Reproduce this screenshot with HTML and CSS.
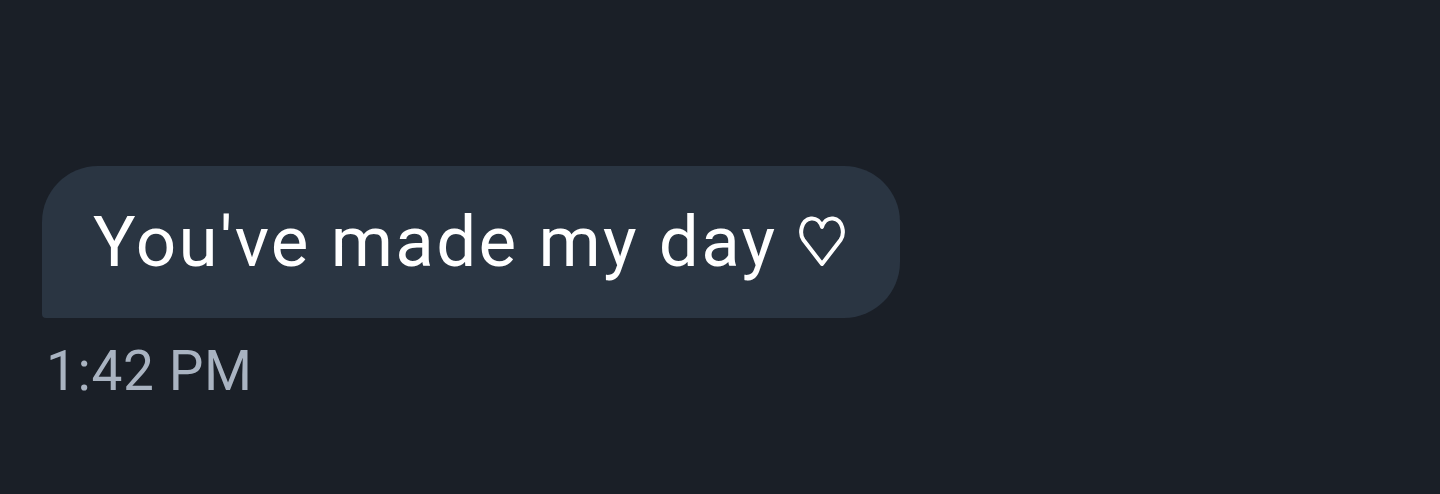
FILE: index.html
```html
<!doctype html>
<html lang="en">
<head>
    <meta charset="UTF-8">
    <title>Message</title>
    <link rel="stylesheet" href="styles.css">
</head>
<body>
<div class="chat">
    <div class="msg">
        <div class="bubble">You've made my day <svg class="heart" width="46" height="51" viewBox="0 0 46 51"><path d="M23 48 L4.5 24 C0 17.5 2 4 12 2.5 C17.5 1.8 21.5 6 23 11 C24.5 6 28.5 1.8 34 2.5 C44 4 46 17.5 41.5 24 Z" fill="none" stroke="#fff" stroke-width="4" stroke-linejoin="round"/></svg></div>
        <div class="time">1:42 PM</div>
    </div>
</div>
</body>
</html>
```

FILE: styles.css
```css
*{
    margin: 0;
    padding: 0;
}

body{
    background-color: #1a1f27;
    font-family: Roboto, "Noto Sans", sans-serif;
}

.chat{
    padding: 166px 42px 0;
}
.msg{
    display: flex;
    flex-direction: column;
    align-items: flex-start;
}
.bubble{
    background-color: #2a3542;
    color: #fff;
    font-size: 71px;
    letter-spacing: 2.3px;
    line-height: 152px;
    height: 152px;
    padding: 0 55px 0 51px;
    border-radius: 56px 56px 56px 4px;
    white-space: nowrap;
}
.heart{
    vertical-align: -1px;
    margin-left: 2px;
}
.time{
    color: #a9b3c1;
    font-size: 55px;
    letter-spacing: 0.6px;
    margin-top: 18px;
    padding-left: 4px;
    line-height: 70px;
}
```
